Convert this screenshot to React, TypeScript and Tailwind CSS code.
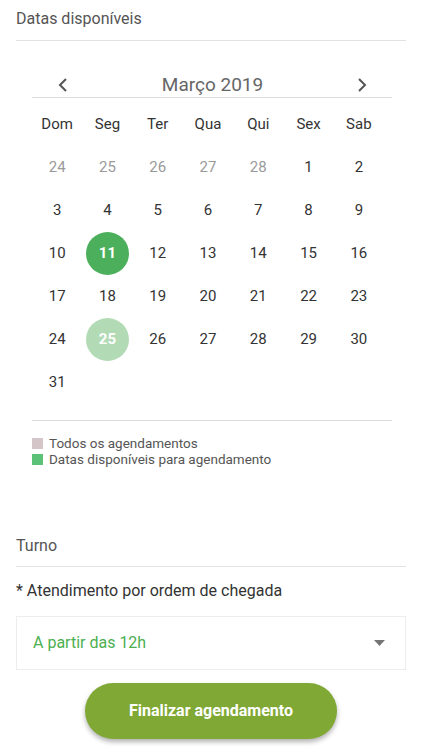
import React from "react";

const WEEKDAYS = ["Dom", "Seg", "Ter", "Qua", "Qui", "Sex", "Sab"];

type Day = { n: number; muted?: boolean; state?: "selected" | "available" };

const WEEKS: (Day | null)[][] = [
  [{ n: 24, muted: true }, { n: 25, muted: true }, { n: 26, muted: true }, { n: 27, muted: true }, { n: 28, muted: true }, { n: 1 }, { n: 2 }],
  [{ n: 3 }, { n: 4 }, { n: 5 }, { n: 6 }, { n: 7 }, { n: 8 }, { n: 9 }],
  [{ n: 10 }, { n: 11, state: "selected" }, { n: 12 }, { n: 13 }, { n: 14 }, { n: 15 }, { n: 16 }],
  [{ n: 17 }, { n: 18 }, { n: 19 }, { n: 20 }, { n: 21 }, { n: 22 }, { n: 23 }],
  [{ n: 24 }, { n: 25, state: "available" }, { n: 26 }, { n: 27 }, { n: 28 }, { n: 29 }, { n: 30 }],
  [{ n: 31 }, null, null, null, null, null, null],
];

function DayCell({ day }: { day: Day | null }) {
  if (!day) return <div className="h-[43px]" />;
  if (day.state) {
    const bg = day.state === "selected" ? "bg-[#4caf5c]" : "bg-[#b2dbb5]";
    return (
      <div className="h-[43px] flex items-center justify-center">
        <div className={`w-[43px] h-[43px] rounded-full ${bg} flex items-center justify-center text-white font-bold text-[15px]`}>
          {day.n}
        </div>
      </div>
    );
  }
  return (
    <div className={`h-[43px] flex items-center justify-center text-[15px] ${day.muted ? "text-[#9a9a9a]" : "text-[#333]"}`}>
      {day.n}
    </div>
  );
}

export default function App() {
  return (
    <div className="w-[422px] h-[750px] bg-white overflow-hidden" style={{ fontFamily: "Roboto, 'Noto Sans', sans-serif" }}>
      <div className="px-4 pt-[9px]">
        <p className="text-[16px] leading-5 text-[#555]">Datas disponíveis</p>
        <div className="h-px bg-[#e2e2e2] mt-[11px]" />
      </div>

      {/* Calendar */}
      <div className="ml-8 w-[360px] mt-[32px]">
        <div className="flex items-center justify-between h-6 pl-[25px] pr-[24px]">
          <button className="text-[#555]">
            <svg width="12" height="16" viewBox="0 0 12 16" fill="none" stroke="currentColor" strokeWidth="2">
              <path d="M9 2L3 8l6 6" />
            </svg>
          </button>
          <div className="text-[19px] leading-6 text-[#666]">Março 2019</div>
          <button className="text-[#555]">
            <svg width="12" height="16" viewBox="0 0 12 16" fill="none" stroke="currentColor" strokeWidth="2">
              <path d="M3 2l6 6-6 6" />
            </svg>
          </button>
        </div>
        <div className="h-px bg-[#dcdcdc]" />

        <div className="w-[352px] grid grid-cols-7 mt-4">
          {WEEKDAYS.map((w) => (
            <div key={w} className="text-center text-[15px] leading-5 text-[#333]">
              {w}
            </div>
          ))}
        </div>
        <div className="w-[352px] grid grid-cols-7 mt-3">
          {WEEKS.flat().map((d, i) => (
            <DayCell key={i} day={d} />
          ))}
        </div>
        <div className="h-px bg-[#dcdcdc] mt-4" />

        {/* Legend */}
        <div className="mt-[14px] text-[13.5px] leading-4 text-[#555]">
          <div className="flex items-center gap-[6px]">
            <span className="w-[11px] h-[11px] bg-[#d4c5c9]" />
            Todos os agendamentos
          </div>
          <div className="flex items-center gap-[6px]">
            <span className="w-[11px] h-[11px] bg-[#5cc277]" />
            Datas disponíveis para agendamento
          </div>
        </div>
      </div>

      {/* Turno */}
      <div className="px-4 mt-[69px]">
        <p className="text-[16px] leading-5 text-[#555]">Turno</p>
        <div className="h-px bg-[#e2e2e2] mt-[10px]" />
        <p className="text-[16px] leading-5 text-[#333] mt-[14px]">* Atendimento por ordem de chegada</p>

        <div className="mt-[15px] h-[54px] border border-[#ededed] flex items-center justify-between pl-[16px] pr-[20px]">
          <span className="text-[16px] text-[#4caf50]">A partir das 12h</span>
          <svg width="11" height="6" viewBox="0 0 11 6">
            <path d="M0 0h11L5.5 6z" fill="#757575" />
          </svg>
        </div>

        <div className="flex justify-center mt-[13px]">
          <button className="w-[252px] h-[56px] rounded-full bg-[#7fa834] text-white font-bold text-[16px] shadow-[0_3px_5px_rgba(0,0,0,0.3)]">
            Finalizar agendamento
          </button>
        </div>
      </div>
    </div>
  );
}
